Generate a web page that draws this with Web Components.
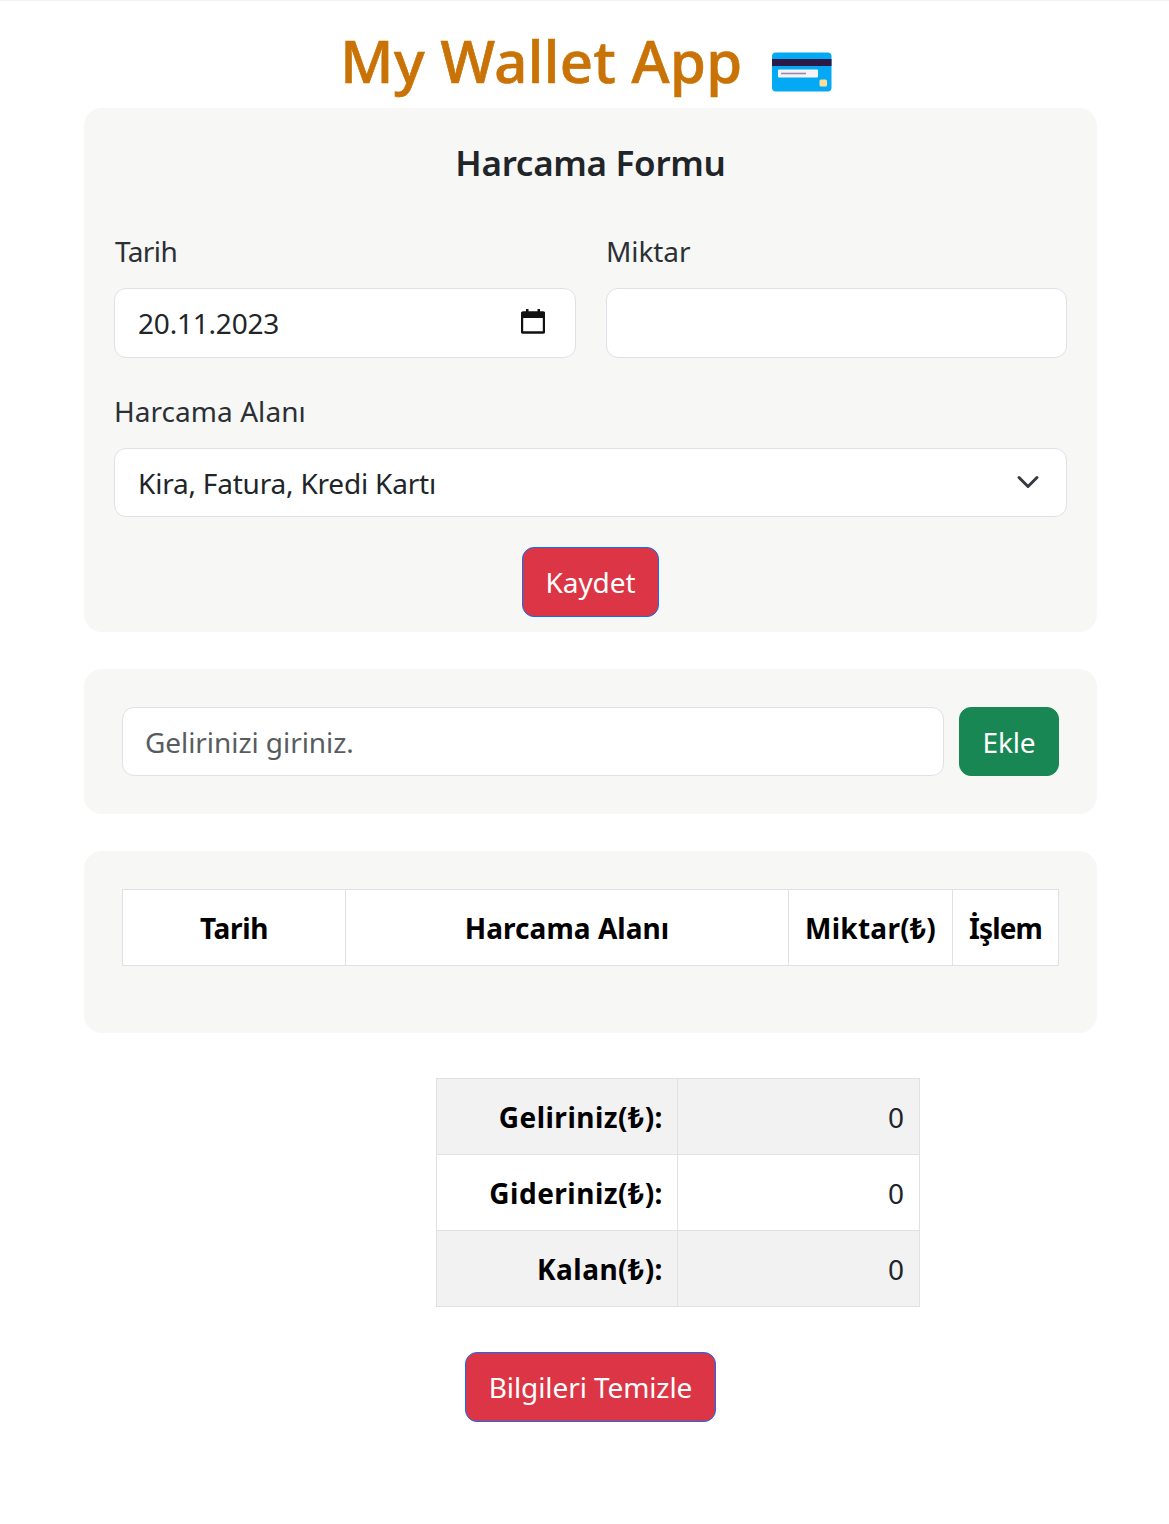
<!doctype html>
<html lang="tr"><head><meta charset="utf-8"><title>My Wallet App</title>
<style>
html,body{margin:0;background:#fff}
body{font-family:"Noto Sans","Open Sans",sans-serif;font-size:28px;color:#212529;border-top:1px solid #f2f2f2;height:1523px;overflow:hidden}
</style></head><body>
<wallet-app></wallet-app>
<template id="t-app"><style>
:host{display:flex;flex-direction:column;width:1013px;margin-left:84px}
h1{margin:0;height:107px;box-sizing:border-box;padding:24px 9px 0 0;font-size:58px;line-height:72px;font-weight:500;-webkit-text-stroke:.7px #c97205;color:#c97205;text-align:center;letter-spacing:.38px;display:flex;justify-content:center;white-space:nowrap}
h1 svg{margin:27px 0 0 29px;width:60px;height:40px;flex:none}
.stack{display:flex;flex-direction:column;gap:37px}
.center{display:flex;justify-content:center}
.grid{display:grid;grid-template-columns:462px 461px;gap:0 30px}
h2{margin:0 0 43px;font-size:35px;line-height:50px;font-weight:600;text-align:center;letter-spacing:-.3px}
.sum{margin-top:45px;margin-left:352px}
.clear{margin-top:45px}
</style>
<h1>My Wallet App<svg viewBox="0 0 60 40" aria-hidden="true"><rect y="0.5" width="59.5" height="39" rx="4" fill="#03a9f4"/><path d="M0 7h59.5v7H0z" fill="#2d1b47"/><rect x="6" y="17.5" width="40" height="8" rx="1" fill="#f4f4f4"/><path d="M9 21.5h25" stroke="#9c86b5" stroke-width="1.6"/><rect x="47.5" y="27.500" width="7.500" height="7" rx="1.500" fill="#fbdc9b"/></svg></h1>
<div class="stack">
<wallet-card pad="form">
<h2>Harcama Formu</h2>
<div class="grid">
<form-field label="Tarih" style="--ls:-.6px;--lx:1px"><date-box>20.11.2023</date-box></form-field>
<form-field label="Miktar"><text-box></text-box></form-field>
</div>
<form-field label="Harcama Alanı" class="wide" style="--ls:.05px"><select-box style="height:69px">Kira, Fatura, Kredi Kartı</select-box></form-field>
<div class="center" style="margin-top:30px"><action-button kind="danger">Kaydet</action-button></div>
</wallet-card>
<wallet-card>
<income-row></income-row>
</wallet-card>
<wallet-card pad="table"><expense-table></expense-table></wallet-card>
</div>
<div class="sum"><summary-table></summary-table></div>
<div class="center clear"><action-button kind="danger">Bilgileri Temizle</action-button></div>
</template>

<template id="t-card"><style>
:host{display:block;background:#f7f7f5;border-radius:18px;padding:38px}
:host([pad=form]){padding:30px 30px 15px}
:host([pad=table]){padding:38px 38px 67px}
</style><slot></slot></template>

<template id="t-field"><style>
:host{display:block}
label{display:block;font-size:28px;line-height:40px;letter-spacing:var(--ls,-.1px);margin:0 0 17px var(--lx,0);color:#2b3035}
:host(.wide){margin-top:33px}
</style><label></label><slot></slot></template>

<template id="t-box"><style>
:host{display:flex;align-items:center;justify-content:space-between;box-sizing:border-box;height:70px;background:#fff;border:1px solid #dee2e6;border-radius:12px;padding:0 23px;font-size:28px;letter-spacing:-.2px;color:#212529;white-space:nowrap}
input{all:unset;flex:1;min-width:0;height:100%;font:inherit;letter-spacing:inherit}
</style><slot></slot></template>

<template id="t-income"><style>
:host{display:flex;gap:15px}
input{flex:1;min-width:0;box-sizing:border-box;height:69px;background:#fff;border:1px solid #dee2e6;border-radius:12px;padding:0 22px;font:inherit;font-size:28px;letter-spacing:-.07px;color:#212529;outline:0}
input::placeholder{color:#595c5f;opacity:1}
</style><input type="text" placeholder="Gelirinizi giriniz."><action-button kind="success">Ekle</action-button></template>

<template id="t-btn"><style>
:host{display:inline-flex}
button{box-sizing:border-box;height:70px;padding:0 23px;border-radius:12px;font:inherit;font-size:28px;letter-spacing:-.1px;color:#fff;background:#dc3545;border:1px solid #0d6efd;white-space:nowrap}
:host([kind=success]) button{background:#198754;border-color:#198754;height:69px;width:100px;padding:0}
</style><button type="button"><slot></slot></button></template>

<template id="t-table"><style>
:host{display:block}
table{border-collapse:collapse;table-layout:fixed;width:936px;background:#fff;color:#000}
th{border:1px solid #dee2e6;height:76px;padding:0;box-sizing:border-box;font-size:28px;font-weight:700;text-align:center}
</style><table><colgroup><col style="width:223px"><col style="width:443px"><col style="width:164px"><col style="width:106px"></colgroup><thead><tr><th style="letter-spacing:-.35px">Tarih</th><th style="letter-spacing:.05px">Harcama Alanı</th><th style="letter-spacing:.27px">Miktar(₺)</th><th style="letter-spacing:-.9px">İşlem</th></tr></thead></table></template>

<template id="t-sum"><style>
:host{display:block}
table{border-collapse:collapse;table-layout:fixed;width:483px;color:#000;background:#fff}
th,td{border:1px solid #dee2e6;height:76px;box-sizing:border-box;padding:0 15px;font-size:28px;text-align:right}
th{font-weight:700;letter-spacing:.5px;padding-right:14px}
td{color:#212529}
tr:nth-child(odd){background:#f2f2f2}
</style><table><colgroup><col style="width:241px"><col style="width:242px"></colgroup><tbody>
<tr><th>Geliriniz(₺):</th><td>0</td></tr><tr><th>Gideriniz(₺):</th><td>0</td></tr><tr><th>Kalan(₺):</th><td>0</td></tr></tbody></table></template>

<script>
function mount(el,id){const r=el.attachShadow({mode:'open'});r.appendChild(document.getElementById(id).content.cloneNode(true));return r}
const simple=(tag,id)=>customElements.define(tag,class extends HTMLElement{constructor(){super();mount(this,id)}});
simple('wallet-app','t-app');simple('wallet-card','t-card');simple('income-row','t-income');simple('action-button','t-btn');simple('expense-table','t-table');simple('summary-table','t-sum');
customElements.define('form-field',class extends HTMLElement{constructor(){super();const r=mount(this,'t-field');r.querySelector('label').textContent=this.getAttribute('label')}});
customElements.define('text-box',class extends HTMLElement{constructor(){super();const r=mount(this,'t-box');const i=document.createElement('input');i.type='text';r.appendChild(i)}});
customElements.define('date-box',class extends HTMLElement{constructor(){super();const r=mount(this,'t-box');r.appendChild(document.createRange().createContextualFragment('<svg width="24" height="26" viewBox="0 0 24 26" style="margin:-3px 7px 1px 0;flex:none" aria-hidden="true"><path d="M2 4.500h20a1 1 0 0 1 1 1v18a1 1 0 0 1-1 1H2a1 1 0 0 1-1-1v-18a1 1 0 0 1 1-1z" fill="none" stroke="#111" stroke-width="2.400"/><path d="M1 4h22v6H1z" fill="#111"/><path d="M5 1h2.500v4H5zM16.500 1H19v4h-2.500z" fill="#111"/></svg>'))}});
customElements.define('select-box',class extends HTMLElement{constructor(){super();const r=mount(this,'t-box');r.appendChild(document.createRange().createContextualFragment('<svg width="24" height="18" viewBox="0 0 16 12" style="flex:none;margin:-1px 3px 0 0" aria-hidden="true"><path d="m2 3 6 6 6-6" fill="none" stroke="#343a40" stroke-width="2" stroke-linecap="round" stroke-linejoin="round"/></svg>'))}});
</script>
</body></html>
